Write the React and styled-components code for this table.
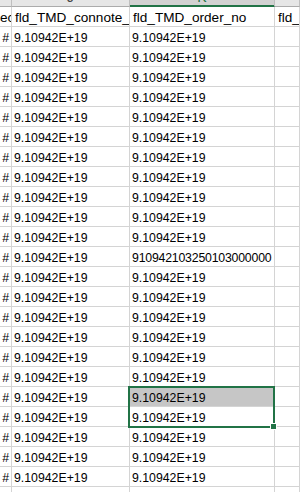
import React from 'react'
import styled, { createGlobalStyle } from 'styled-components'

const GlobalStyle = createGlobalStyle`
    html, body {
        margin: 0;
        padding: 0;
        background: #fff;
    }
`

const GRID = '#d4d4d4'
const GREEN = '#217346'

const Sheet = styled.div`
    position: relative;
    width: 300px;
    height: 492px;
    overflow: hidden;
    font-family: "Liberation Sans", Arial, sans-serif;
    color: #000;
    background: #fff;
`

const Columns = styled.div`
    display: grid;
    grid-template-columns: 12px 118px 145px 1fr;
`

const LetterCell = styled.div`
    height: 6px;
    overflow: hidden;
    background: ${p => p.selected ? '#d2d2d2' : '#e6e6e6'};
    border-right: 1px solid #bfbfbf;
    border-bottom: 1px solid ${p => p.selected ? GREEN : '#ababab'};
    box-shadow: ${p => p.selected ? `inset 0 -1px 0 ${GREEN}` : 'none'};
    display: flex;
    justify-content: center;
    font-size: 14px;
    line-height: 14px;
    color: ${p => p.selected ? GREEN : '#444'};

    span {
        margin-top: -10px;
    }
`

const Cell = styled.div`
    overflow: hidden;
    white-space: nowrap;
    border-right: 1px solid ${GRID};
    border-bottom: 1px solid ${GRID};
    background: ${p => p.shade ? '#c6c6c6' : '#fff'};
    display: flex;
    justify-content: ${p => p.right ? 'flex-end' : 'flex-start'};
    padding: ${p => p.right ? '4px 2px 0 0' : '4px 0 0 2px'};
    box-sizing: border-box;
    height: 20px;
    font-size: 12.3px;
    line-height: 15px;
    letter-spacing: ${p => p.tight ? '-0.2px' : 'normal'};
`

const HeadCell = styled(Cell)`
    font-size: 13.6px;
    padding-top: 3px;
    padding-left: ${p => p.flush ? '0' : '3px'};
`

const Selection = styled.div`
    position: absolute;
    left: 128px;
    top: 386px;
    width: 147px;
    height: 42px;
    box-sizing: border-box;
    border: 2px solid ${GREEN};
    pointer-events: none;
`

const Handle = styled.div`
    position: absolute;
    right: -4px;
    bottom: -4px;
    width: 5px;
    height: 5px;
    background: ${GREEN};
    border: 1px solid #fff;
`

const LONG_ROW = 11
const ACTIVE_ROW = 18

const rows = Array.from({ length: 24 }, (_, i) =>
    i === LONG_ROW ? '910942103250103000000' : '9.10942E+19'
)

export default function App() {
    return (
        <>
            <GlobalStyle />
            <Sheet>
                <Columns>
                    <LetterCell />
                    <LetterCell><span>J</span></LetterCell>
                    <LetterCell selected><span>K</span></LetterCell>
                    <LetterCell />

                    <HeadCell flush>ec</HeadCell>
                    <HeadCell>fld_TMD_connote_no</HeadCell>
                    <HeadCell>fld_TMD_order_no</HeadCell>
                    <HeadCell>fld_TMD_status</HeadCell>

                    {rows.map((value, i) => (
                        <React.Fragment key={i}>
                            <Cell right>#</Cell>
                            <Cell>9.10942E+19</Cell>
                            <Cell shade={i === ACTIVE_ROW} tight={i === LONG_ROW}>{value}</Cell>
                            <Cell />
                        </React.Fragment>
                    ))}
                </Columns>

                <Selection>
                    <Handle />
                </Selection>
            </Sheet>
        </>
    )
}
